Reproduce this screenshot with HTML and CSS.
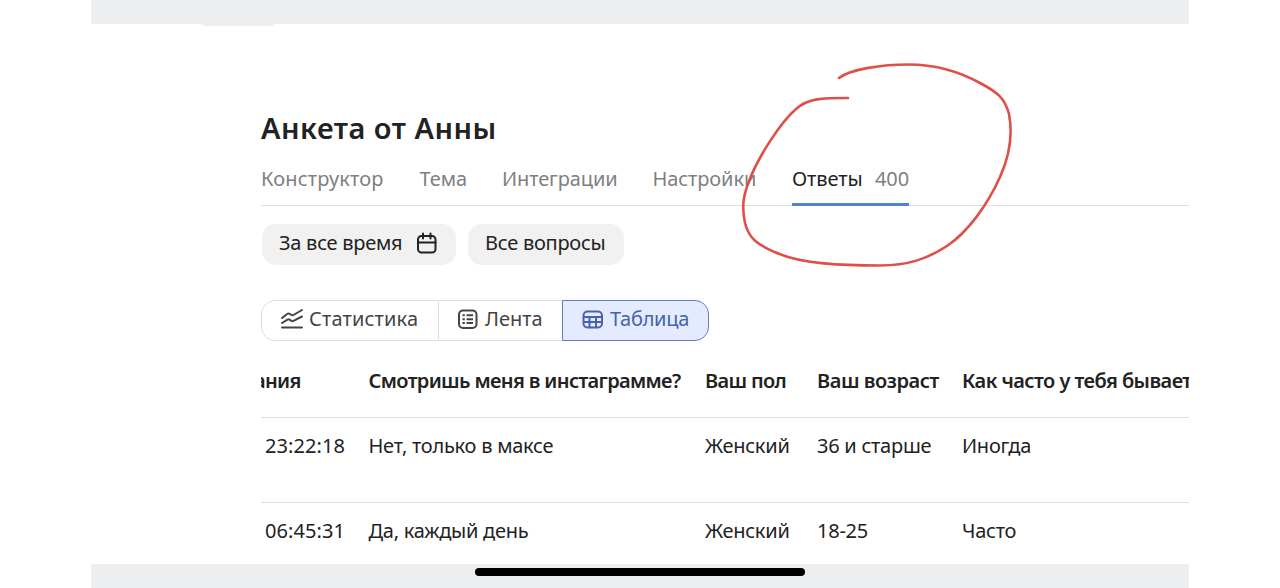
FILE: index.html
```
<!DOCTYPE html>
<html lang="ru">
  <head>
    <meta charset="UTF-8" />
    <meta name="viewport" content="width=device-width, initial-scale=1.0" />
    <title>Анкета от Анны</title>
    <link rel="stylesheet" href="styles.css">
  </head>
  <body>
    <div class="screen">
      <div class="topbar"><span class="bump"></span></div>

      <main class="content">
        <h1>Анкета от Анны</h1>

        <nav class="tabs">
          <a class="tab builder">Конструктор</a>
          <a class="tab">Тема</a>
          <a class="tab">Интеграции</a>
          <a class="tab">Настройки</a>
          <a class="tab active"><span>Ответы</span><span class="count">400</span></a>
        </nav>

        <div class="filters">
          <button class="filter period">
            <span>За все время</span>
            <svg width="22" height="22" viewBox="0 0 22 22" fill="none" stroke="#222" stroke-width="2" stroke-linecap="round">
              <rect x="2" y="4" width="17.5" height="16.5" rx="3.5" />
              <path d="M2 10.5h17.5M7 1.5v5M14.5 1.5v5" />
            </svg>
          </button>
          <button class="filter questions"><span>Все вопросы</span></button>
        </div>

        <div class="views">
          <button class="view stat">
            <svg width="24" height="22" viewBox="0 0 24 22" fill="none" stroke="#444" stroke-width="2" stroke-linecap="round" stroke-linejoin="round">
              <path d="M2 10l5.5-4.2q1-.7 2 0l2 1.2q1 .6 2 0L22 2M2 15l5.5-3.3q1-.7 2 0l2 1.2q1 .6 2 0L22 8.500M2 19.5h20" />
            </svg>
            <span>Статистика</span>
          </button>
          <button class="view feed">
            <svg width="22" height="22" viewBox="0 0 22 22" fill="none" stroke="#444" stroke-width="2">
              <rect x="2" y="2.5" width="17.5" height="17.5" rx="4" />
              <path d="M5.5 7.300h2.300M5.5 11.200h2.300M5.5 15.100h2.300M9.5 7.300H16M9.5 11.200H16M9.5 15.100H16" />
            </svg>
            <span>Лента</span>
          </button>
          <button class="view grid active">
            <svg width="22" height="22" viewBox="0 0 22 22" fill="none" stroke="#4663ac" stroke-width="2">
              <rect x="1.5" y="3.5" width="18.5" height="16" rx="4" />
              <path d="M1.5 9h18.5M1.5 14h18.5M7.5 9v10.5M14 9v10.5" />
            </svg>
            <span>Таблица</span>
          </button>
        </div>

        <div class="table-wrap">
          <table>
            <colgroup>
              <col class="c-time"><col class="c-insta"><col class="c-sex"><col class="c-age"><col class="c-often">
            </colgroup>
            <thead>
              <tr>
                <th class="cut">ания</th>
                <th>Смотришь меня в инстаграмме?</th>
                <th>Ваш пол</th>
                <th class="age">Ваш возраст</th>
                <th class="often">Как часто у тебя бывает</th>
              </tr>
            </thead>
            <tbody>
              <tr>
                <td class="time">23:22:18</td>
                <td>Нет, только в максе</td>
                <td>Женский</td>
                <td>36 и старше</td>
                <td>Иногда</td>
              </tr>
              <tr>
                <td class="time">06:45:31</td>
                <td>Да, каждый день</td>
                <td>Женский</td>
                <td>18-25</td>
                <td>Часто</td>
              </tr>
            </tbody>
          </table>
        </div>
      </main>

      <div class="bottombar"><span class="home"></span></div>

      <!-- red marker around the answers tab -->
      <svg class="marker" width="290" height="220" viewBox="732 56 290 220" fill="none" stroke="#e04f47" stroke-width="2.6" stroke-linecap="round">
        <path d="M839 78C851 69 882 64.5 909 64.5C936 64.5 958 71 980 83C997 92 1005 98 1009 114C1013 135 1010 155 1000 177C988 204 968 232 947 246C927 259 908 265.5 880 265.5C843 265.5 802 264 777 253C758 245 749 239 745 223C741 204 744 193 751 176C760 155 780 123 796 109C808 98 823 98 848 98" />
      </svg>
    </div>
  </body>
</html>
```

FILE: styles.css
```
* {
  box-sizing: border-box;
}
body {
  margin: 0;
  background: #fff;
  color: #222;
  font-family: "Noto Sans", sans-serif;
  font-size: 20px;
  line-height: 28px;
  letter-spacing: -0.25px;
}
.screen {
  position: relative;
  display: flex;
  flex-direction: column;
  width: 1098px;
  height: 588px;
  margin-left: 91px;
  overflow: hidden;
}
.topbar {
  position: relative;
  height: 24px;
  flex: none;
  background: #edeef0;
}
.bump {
  position: absolute;
  left: 108px;
  bottom: -2px;
  width: 78px;
  height: 14px;
  border-radius: 10px;
  background: #edeef0;
}
.content {
  flex: 1;
  min-height: 0;
  overflow: hidden;
  padding: 85px 0 0 170px;
}
h1 {
  margin: 0;
  font-size: 29px;
  font-weight: 600;
  line-height: 38px;
  letter-spacing: 0.5px;
  white-space: nowrap;
}
.tabs {
  display: grid;
  grid-template-columns: 158.5px 82.5px 150.5px 139.5px 117px;
  height: 59px;
  padding-top: 18px;
  border-bottom: 1px solid #dedede;
  color: #808080;
}
.tab {
  height: 41px;
  white-space: nowrap;
  letter-spacing: -0.1px;
}
.builder {
  letter-spacing: 0.15px;
}
.tab.active {
  display: flex;
  justify-content: space-between;
  color: #222;
  border-bottom: 3px solid #5282db;
}
.count {
  color: #808080;
}
.filters {
  display: flex;
  gap: 12px;
  margin-top: 18px;
}
button {
  display: flex;
  align-items: center;
  padding: 0;
  border: none;
  font: inherit;
  color: inherit;
  letter-spacing: inherit;
  white-space: nowrap;
}
.filter {
  height: 41px;
  padding: 0 18px 3px 17px;
  border-radius: 14px;
  background: #f1f1f1;
  justify-content: space-between;
  letter-spacing: -0.25px;
}
.period {
  width: 194px;
  margin-left: 1px;
}
.questions {
  width: 156px;
}
.views {
  display: flex;
  margin-top: 35px;
}
.view {
  height: 41px;
  padding-bottom: 3px;
  gap: 5px;
  border: 1px solid #dedede;
  background: #fff;
  color: #444;
}
.stat {
  width: 178px;
  padding-left: 18px;
  border-radius: 14px 0 0 14px;
  letter-spacing: 0.15px;
}
.feed {
  width: 123px;
  padding-left: 18px;
  gap: 6px;
  border-left: none;
  border-right: none;
  letter-spacing: 0;
}
.grid {
  width: 147px;
  padding-left: 19px;
  gap: 6px;
  border-color: #5f80c9;
  border-radius: 0 14px 14px 0;
  background: #e5ebff;
  color: #4663ac;
}
.table-wrap {
  overflow: hidden;
}
table {
  width: 928px;
  table-layout: fixed;
  border-collapse: collapse;
}
.c-time {
  width: 107.5px;
}
.c-insta {
  width: 336.5px;
}
.c-sex {
  width: 112px;
}
.c-age {
  width: 145px;
}
th,
td {
  padding: 0;
  text-align: left;
  vertical-align: top;
  white-space: nowrap;
  border-bottom: 1px solid #dedede;
}
th {
  height: 76px;
  padding-top: 26px;
  font-weight: 600;
  letter-spacing: -0.65px;
}
.age {
  letter-spacing: -0.45px;
}
.often {
  letter-spacing: -0.55px;
}
td {
  height: 85px;
  padding-top: 14px;
}
.cut {
  text-indent: -7px;
}
.time {
  padding-left: 4px;
  letter-spacing: 0.1px;
}
.bottombar {
  flex: none;
  display: flex;
  justify-content: center;
  height: 24px;
  padding-top: 4px;
  background: #edeef0;
}
.home {
  width: 330px;
  height: 8px;
  border-radius: 4px;
  background: #000;
}
.marker {
  position: absolute;
  left: 641px;
  top: 56px;
}
```
